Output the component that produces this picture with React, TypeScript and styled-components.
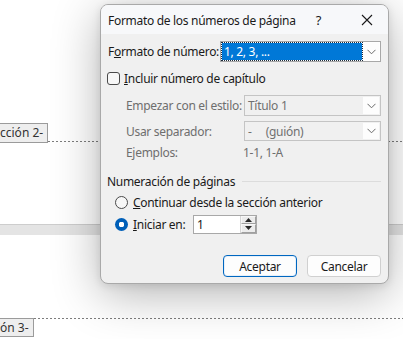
import React from "react";
import styled, { createGlobalStyle } from "styled-components";

const GlobalStyle = createGlobalStyle`
  html, body {
    margin: 0;
    padding: 0;
    background: #fff;
    overflow: hidden;
  }
  body {
    font-family: "Segoe UI", "Noto Sans", "Liberation Sans", sans-serif;
    font-size: 12px;
    letter-spacing: -0.3px;
    color: #1a1a1a;
  }
`;

function Chevron() {
  return (
    <svg width="9" height="6" viewBox="0 0 9 6">
      <path d="M0.5 0.8 L4.5 4.8 L8.5 0.8" fill="none" stroke="#6a6a6a" strokeWidth="1" />
    </svg>
  );
}

function Select({ value, selected, disabled, width }: { value: string; selected?: boolean; disabled?: boolean; width: number }) {
  return (
    <SelectBox width={width} disabled={disabled}>
      <SelectValue selected={selected} disabled={disabled}>{value}</SelectValue>
      <ArrowButton>
        <Chevron />
      </ArrowButton>
    </SelectBox>
  );
}

export default function App() {
  return (
    <>
      <GlobalStyle />
      <Stage>
        <PageArea height={224}>
          <SectionRow top={123} align="flex-end">
            <SectionTag height={20}>cción 2-</SectionTag>
            <DashLine side="bottom" />
          </SectionRow>
        </PageArea>
        <PageGap />
        <PageArea height={104}>
          <SectionRow top={83} align="flex-start">
            <SectionTag height={19}>ón 3-</SectionTag>
            <DashLine side="top" />
          </SectionRow>
        </PageArea>

        <Dialog>
          <TitleBar>
            <Title>Formato de los números de página</Title>
            <TitleButtons>
              <HelpMark>?</HelpMark>
              <svg width="12" height="12" viewBox="0 0 12 12">
                <path d="M1 1 L11 11 M11 1 L1 11" stroke="#1a1a1a" strokeWidth="1.1" />
              </svg>
            </TitleButtons>
          </TitleBar>

          <Body>
            <Row h={21} mt={7}>
              <Label w={112}>
                F<u>o</u>rmato de número:
              </Label>
              <Select value="1, 2, 3, ..." selected width={161} />
            </Row>

            <Row h={33}>
              <CheckBox />
              <Label>
                <u>I</u>ncluir número de capítulo
              </Label>
            </Row>

            <Row h={21} indent={18}>
              <Label w={118} muted>Empezar con el estilo:</Label>
              <Select value="Título 1" disabled width={137} />
            </Row>

            <Row h={20} mt={5} indent={18}>
              <Label w={118} muted>Usar separador:</Label>
              <Select value={"-\u00a0\u00a0\u00a0\u00a0\u00a0(guión)"} disabled width={137} />
            </Row>

            <Row h={22} indent={18}>
              <Label w={115} muted>Ejemplos:</Label>
              <Label muted>1-1, 1-A</Label>
            </Row>

            <Row h={22} mt={7}>
              <GroupTitle>Numeración de páginas</GroupTitle>
              <GroupLine />
            </Row>

            <Row h={20} indent={9}>
              <Radio />
              <Label>
                <u>C</u>ontinuar desde la sección anterior
              </Label>
            </Row>

            <Row h={20} mt={2} indent={9}>
              <Radio checked />
              <Label w={60}>
                <u>I</u>niciar en:
              </Label>
              <Spinner>
                <SpinValue>1</SpinValue>
                <SpinButtons>
                  <SpinBtn>
                    <svg width="7" height="4" viewBox="0 0 7 4">
                      <path d="M0 4 L3.5 0 L7 4 Z" fill="#2a2a2a" />
                    </svg>
                  </SpinBtn>
                  <SpinBtn>
                    <svg width="7" height="4" viewBox="0 0 7 4">
                      <path d="M0 0 L3.5 4 L7 0 Z" fill="#2a2a2a" />
                    </svg>
                  </SpinBtn>
                </SpinButtons>
              </Spinner>
            </Row>

            <Buttons>
              <PushButton primary>Aceptar</PushButton>
              <PushButton>Cancelar</PushButton>
            </Buttons>
          </Body>
        </Dialog>
      </Stage>
    </>
  );
}

const Stage = styled.div`
  position: relative;
  width: 403px;
  height: 339px;
  overflow: hidden;
  background: #fff;
`;

const PageArea = styled.div<{ height: number }>`
  height: ${(p) => p.height}px;
  background: #fff;
`;

const PageGap = styled.div`
  height: 11px;
  background: #e4e4e4;
  border-top: 1px solid #cdcdcd;
  box-sizing: border-box;
`;

const SectionRow = styled.div<{ top: number; align: string }>`
  display: flex;
  align-items: ${(p) => p.align};
  padding-top: ${(p) => p.top}px;
`;

const SectionTag = styled.div<{ height: number }>`
  height: ${(p) => p.height}px;
  box-sizing: border-box;
  padding: 0 4px 0 0;
  background: #eeeeee;
  border: 1px solid #9b9b9b;
  border-left: none;
  color: #333;
  font-size: 12px;
  line-height: ${(p) => p.height - 2}px;
  white-space: nowrap;
  letter-spacing: 0;
`;

const DashLine = styled.div<{ side: "top" | "bottom" }>`
  flex: 1;
  height: 1px;
  ${(p) => (p.side === "bottom" ? "margin-bottom: 1px;" : "")}
  background-image: repeating-linear-gradient(
    to right,
    #7d7d7d 0,
    #7d7d7d 2px,
    transparent 2px,
    transparent 4px
  );
`;

const Dialog = styled.div`
  position: absolute;
  left: 100px;
  top: 4px;
  width: 289px;
  height: 280px;
  box-sizing: border-box;
  border: 1px solid #a9a9a9;
  border-radius: 8px;
  background: #f0f0f0;
  box-shadow: 0 10px 48px rgba(0, 0, 0, 0.3), 0 2px 8px rgba(0, 0, 0, 0.1);
  overflow: hidden;
  display: flex;
  flex-direction: column;
`;

const TitleBar = styled.div`
  height: 29px;
  flex-shrink: 0;
  background: #f7f8fa;
  display: flex;
  align-items: center;
  justify-content: space-between;
  padding: 0 15px 0 7px;
`;

const Title = styled.div`
  font-size: 12px;
  color: #1a1a1a;
  padding-top: 1px;
`;

const TitleButtons = styled.div`
  display: flex;
  align-items: center;
  gap: 40px;
`;

const HelpMark = styled.span`
  font-size: 13px;
  color: #1a1a1a;
`;

const Body = styled.div`
  display: flex;
  flex-direction: column;
  padding: 0 7px 0 5px;
`;

const Row = styled.div<{ h: number; mt?: number; indent?: number }>`
  height: ${(p) => p.h}px;
  margin-top: ${(p) => p.mt ?? 0}px;
  padding-left: ${(p) => p.indent ?? 0}px;
  display: flex;
  align-items: center;
`;

const Label = styled.span<{ w?: number; muted?: boolean }>`
  ${(p) => (p.w ? `width: ${p.w}px; flex-shrink: 0;` : "")}
  color: ${(p) => (p.muted ? "#6e6e6e" : "#1a1a1a")};
  white-space: nowrap;
  padding-left: 2px;
`;

const SelectBox = styled.div<{ width: number; disabled?: boolean }>`
  width: ${(p) => p.width}px;
  height: 100%;
  box-sizing: border-box;
  border: 1px solid ${(p) => (p.disabled ? "#c4c4c4" : "#a8a8a8")};
  background: ${(p) => (p.disabled ? "#f0f0f0" : "#fff")};
  display: flex;
  align-items: stretch;
  padding: 1px;
`;

const SelectValue = styled.div<{ selected?: boolean; disabled?: boolean }>`
  flex: 1;
  display: flex;
  align-items: center;
  padding-left: 2px;
  color: ${(p) => (p.selected ? "#fff" : p.disabled ? "#707070" : "#1a1a1a")};
  background: ${(p) => (p.selected ? "#0078d7" : "transparent")};
  outline: ${(p) => (p.selected ? "1px dotted #1b2a3a" : "none")};
  white-space: nowrap;
`;

const ArrowButton = styled.div`
  width: 16px;
  margin-left: 1px;
  background: #fdfdfd;
  display: flex;
  align-items: center;
  justify-content: center;
`;

const CheckBox = styled.div`
  width: 13px;
  height: 13px;
  box-sizing: border-box;
  border: 1px solid #4a4a4a;
  border-radius: 3px;
  background: #f7f7f7;
  margin: 0 2px 0 1px;
`;

const GroupTitle = styled.span`
  color: #1a1a1a;
  white-space: nowrap;
  padding-left: 1px;
`;

const GroupLine = styled.div`
  flex: 1;
  height: 1px;
  margin-left: 7px;
  background: #dcdcdc;
`;

const Radio = styled.div<{ checked?: boolean }>`
  width: 13px;
  height: 13px;
  box-sizing: border-box;
  border-radius: 50%;
  margin-right: 3px;
  flex-shrink: 0;
  ${(p) =>
    p.checked
      ? `background: radial-gradient(circle, #fff 0 2.6px, #005fb8 3px);`
      : `border: 1px solid #4a4a4a; background: #f7f7f7;`}
`;

const Spinner = styled.div`
  width: 64px;
  height: 19px;
  box-sizing: border-box;
  border: 1px solid #a8a8a8;
  background: #fff;
  display: flex;
  align-items: stretch;
`;

const SpinValue = styled.div`
  flex: 1;
  display: flex;
  align-items: center;
  padding-left: 3px;
  color: #1a1a1a;
`;

const SpinButtons = styled.div`
  width: 15px;
  display: flex;
  flex-direction: column;
  border-left: 1px solid #d6d6d6;
`;

const SpinBtn = styled.div`
  flex: 1;
  display: flex;
  align-items: center;
  justify-content: center;
  background: #ececec;
  border: 1px solid #f8f8f8;
  border-right-color: #a0a0a0;
  border-bottom-color: #a0a0a0;
`;

const Buttons = styled.div`
  margin-top: 21px;
  display: flex;
  justify-content: flex-end;
  gap: 10px;
`;

const PushButton = styled.div<{ primary?: boolean }>`
  width: 74px;
  height: 22px;
  box-sizing: border-box;
  border-radius: 4px;
  border: 1px solid ${(p) => (p.primary ? "#0067c0" : "#d0d0d0")};
  box-shadow: ${(p) => (p.primary ? "inset 0 0 0 1px #e6f0fa" : "none")};
  background: #fdfdfd;
  color: #1a1a1a;
  display: flex;
  align-items: center;
  justify-content: center;
`;
